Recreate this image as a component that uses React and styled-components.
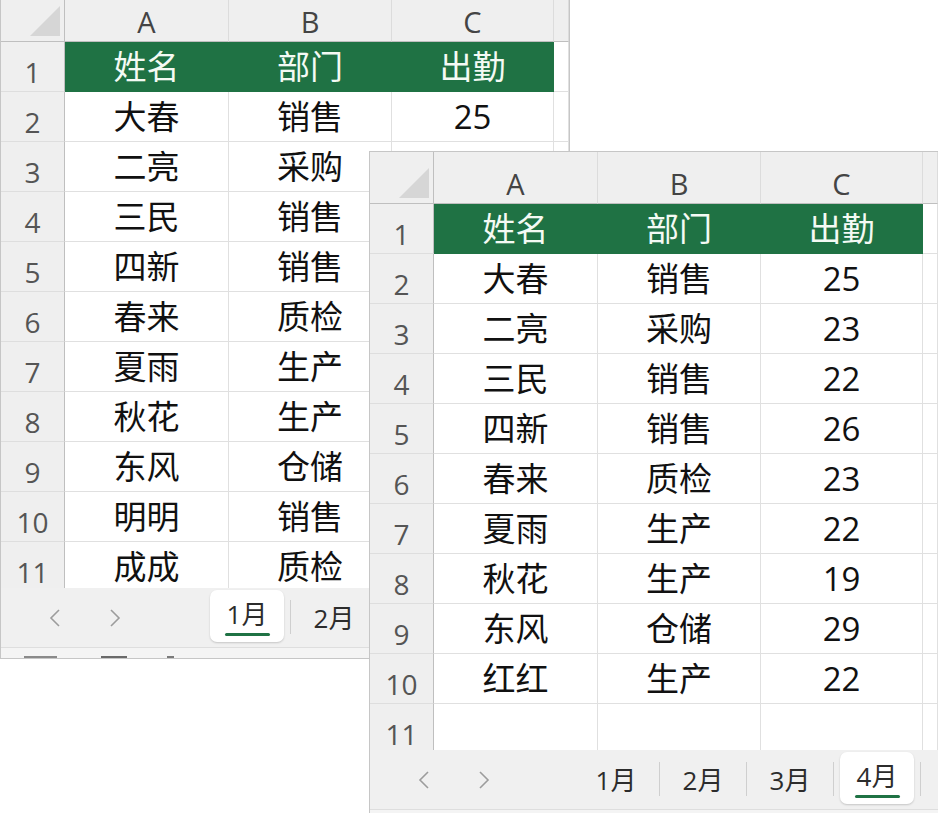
import React from 'react';
import styled, { createGlobalStyle } from 'styled-components';

const GlobalStyle = createGlobalStyle`
  html, body {
    margin: 0;
    padding: 0;
    background: #ffffff;
    overflow: hidden;
  }
  * { box-sizing: border-box; }
`;

const Desktop = styled.div`
  position: relative;
  width: 938px;
  height: 813px;
  overflow: hidden;
  background: #ffffff;
  font-family: "Open Sans", "Noto Sans CJK SC", sans-serif;
`;

// the two sheets overlap like windows on a desktop
const Window = styled.div`
  position: absolute;
  left: ${(p) => p.x}px;
  top: ${(p) => p.y}px;
  width: 570px;
  height: 670px;
  display: flex;
  flex-direction: column;
  border: 1px solid #c6c6c6;
  background: #f0f0f0;
  overflow: hidden;
`;

const Grid = styled.div`
  flex: 0 0 598px;
  display: grid;
  grid-template-columns: 64px 164px 163px 162px 1fr;
  grid-template-rows: 52px;
  grid-auto-rows: 50px;
  overflow: hidden;
  background: #ffffff;
`;

const Corner = styled.div`
  display: flex;
  align-items: flex-end;
  justify-content: flex-end;
  padding: 0 4px 5px 0;
  background: #efefef;
  border-right: 1px solid #bfbfbf;
  border-bottom: 1px solid #bfbfbf;
`;

const ColHead = styled.div`
  display: flex;
  align-items: flex-end;
  justify-content: center;
  padding-bottom: 1px;
  background: #efefef;
  border-right: 1px solid #dcdcdc;
  border-bottom: 1px solid #bfbfbf;
  color: #444;
  font-size: 29px;
  line-height: 36px;
`;

const RowHead = styled.div`
  display: flex;
  align-items: center;
  justify-content: center;
  padding-top: 10px;
  background: #efefef;
  border-right: 1px solid #bfbfbf;
  border-bottom: 1px solid #dedede;
  color: #555;
  font-size: 28px;
  line-height: 1;
`;

const Cell = styled.div`
  display: flex;
  align-items: center;
  justify-content: center;
  background: ${(p) => (p.head ? '#1f7244' : '#ffffff')};
  color: ${(p) => (p.head ? '#f4faf4' : '#111111')};
  border-right: 1px solid ${(p) => (p.head ? '#1f7244' : '#e0e0e0')};
  border-bottom: 1px solid ${(p) => (p.head ? '#1f7244' : '#e0e0e0')};
  font-size: 33px;
  line-height: 1;
`;

const TabBar = styled.div`
  flex: 0 0 59px;
  display: flex;
  align-items: flex-start;
  padding-left: 48px;
  background: #f0f0f0;
`;

const Arrow = styled.svg`
  width: 12px;
  height: 18px;
  margin-top: 21px;
  margin-right: ${(p) => p.gap}px;
  flex: none;
`;

const Tab = styled.div`
  flex: none;
  width: 74px;
  height: 52px;
  margin-top: 2px;
  display: flex;
  flex-direction: column;
  align-items: center;
  padding-top: ${(p) => (p.active ? 9 : 13)}px;
  border-radius: 7px;
  background: ${(p) => (p.active ? '#ffffff' : 'transparent')};
  box-shadow: ${(p) => (p.active ? '0 1px 2px rgba(0,0,0,0.18)' : 'none')};
`;

const TabLabel = styled.span`
  font-size: 26px;
  line-height: 30px;
  color: #2c2c2c;
`;

const Underline = styled.div`
  width: 45px;
  height: 3px;
  margin-top: 4px;
  border-radius: 2px;
  background: #1f7244;
`;

const Sep = styled.div`
  flex: none;
  width: 1px;
  height: 34px;
  margin: 12px 6px 0 6px;
  background: #cfcfcf;
`;

const StatusBar = styled.div`
  flex: 0 0 11px;
  display: flex;
  align-items: flex-end;
  padding-left: 23px;
  background: #f4f4f4;
  border-top: 1px solid #dedede;
`;

const StatusMark = styled.div`
  flex: none;
  width: ${(p) => p.w}px;
  height: 2px;
  margin-right: ${(p) => p.gap}px;
  background: ${(p) => p.color};
`;

const cols = ['A', 'B', 'C', ''];
const header = ['姓名', '部门', '出勤'];

const janRows = [
  ['大春', '销售', '25'],
  ['二亮', '采购', '24'],
  ['三民', '销售', '22'],
  ['四新', '销售', '26'],
  ['春来', '质检', '23'],
  ['夏雨', '生产', '21'],
  ['秋花', '生产', '20'],
  ['东风', '仓储', '28'],
  ['明明', '销售', '24'],
  ['成成', '质检', '25'],
];

const aprRows = [
  ['大春', '销售', '25'],
  ['二亮', '采购', '23'],
  ['三民', '销售', '22'],
  ['四新', '销售', '26'],
  ['春来', '质检', '23'],
  ['夏雨', '生产', '22'],
  ['秋花', '生产', '19'],
  ['东风', '仓储', '29'],
  ['红红', '生产', '22'],
  ['', '', ''],
];

const Chevron = ({ dir, gap }) => (
  <Arrow viewBox="0 0 12 18" gap={gap}>
    <polyline
      points={dir === 'left' ? '10,1 2,9 10,17' : '2,1 10,9 2,17'}
      fill="none"
      stroke="#9c9c9c"
      strokeWidth="1.6"
    />
  </Arrow>
);

const Sheet = ({ x, y, rows, active }) => (
  <Window x={x} y={y}>
    <Grid>
      <Corner>
        <svg width="30" height="30" viewBox="0 0 30 30">
          <polygon points="30,0 30,30 0,30" fill="#d6d6d6" />
        </svg>
      </Corner>
      {cols.map((c, i) => (
        <ColHead key={i}>{c}</ColHead>
      ))}

      <RowHead>1</RowHead>
      {header.map((h) => (
        <Cell key={h} head>
          {h}
        </Cell>
      ))}
      <Cell />

      {rows.map((r, i) => (
        <React.Fragment key={i}>
          <RowHead>{i + 2}</RowHead>
          {r.map((v, j) => (
            <Cell key={j}>{v}</Cell>
          ))}
          <Cell />
        </React.Fragment>
      ))}
    </Grid>

    <TabBar>
      <Chevron dir="left" gap={48} />
      <Chevron dir="right" gap={89} />
      {['1月', '2月', '3月', '4月'].map((t) => (
        <React.Fragment key={t}>
          <Tab active={t === active}>
            <TabLabel>{t}</TabLabel>
            {t === active && <Underline />}
          </Tab>
          <Sep />
        </React.Fragment>
      ))}
    </TabBar>

    <StatusBar>
      <StatusMark w={33} gap={44} color="#8a8a8a" />
      <StatusMark w={26} gap={40} color="#6a6a6a" />
      <StatusMark w={7} gap={0} color="#7a7a7a" />
    </StatusBar>
  </Window>
);

export default function App() {
  return (
    <>
      <GlobalStyle />
      <Desktop>
        <Sheet x={0} y={-11} rows={janRows} active="1月" />
        <Sheet x={369} y={151} rows={aprRows} active="4月" />
      </Desktop>
    </>
  );
}
